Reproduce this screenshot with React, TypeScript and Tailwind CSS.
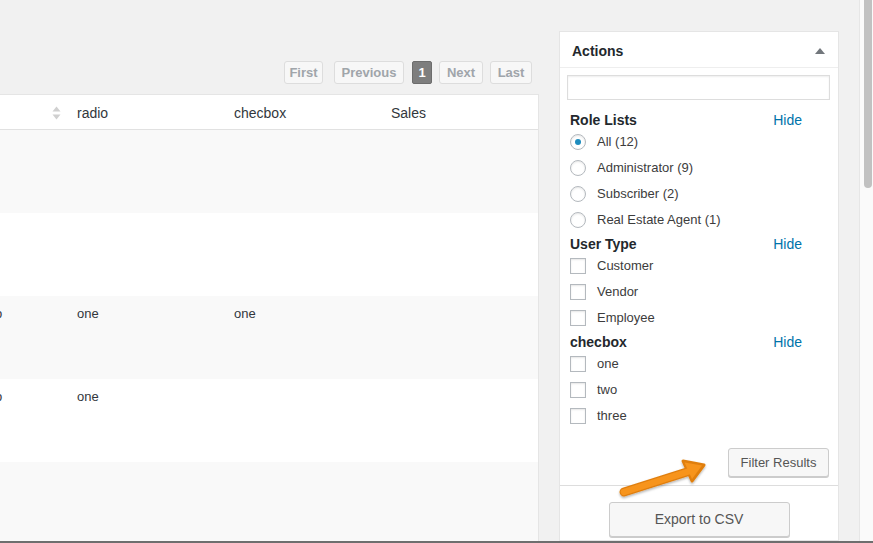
import React from "react";

const font = { fontFamily: '"Liberation Sans", Arial, sans-serif' };

function PageBtn({ label, w }: { label: string; w: string }) {
  return (
    <div
      className={`${w} h-[23px] flex items-center justify-center border border-[#dddddd] bg-[#f7f7f7] rounded-[3px] text-[13px] font-bold text-[#a0a5aa]`}
    >
      {label}
    </div>
  );
}

function SortArrows() {
  return (
    <svg width="9" height="14" viewBox="0 0 9 14">
      <path d="M4.5 0.5 L8.5 5.5 L0.5 5.5 Z" fill="#d0d0d0" />
      <path d="M4.5 13.5 L8.5 8.5 L0.5 8.5 Z" fill="#d0d0d0" />
    </svg>
  );
}

function Row({ bg, c0, c1, c2 }: { bg: string; c0?: string; c1?: string; c2?: string }) {
  return (
    <div className={`flex shrink-0 h-[83px] ${bg} text-[13px] text-[#32373c]`}>
      <div className="w-[67px] overflow-hidden pt-[9px]">
        {c0 && <span className="block ml-[-5px] leading-[18px]">{c0}</span>}
      </div>
      <div className="w-[157px] px-[10px] pt-[9px] leading-[18px]">{c1}</div>
      <div className="w-[157px] px-[10px] pt-[9px] leading-[18px]">{c2}</div>
      <div className="flex-1 px-[10px] pt-[9px] leading-[18px]"></div>
    </div>
  );
}

function Radio({ checked }: { checked?: boolean }) {
  return (
    <div className="w-[16px] h-[16px] rounded-full border border-[#b4b9be] bg-white shadow-[inset_0_1px_2px_rgba(0,0,0,0.1)] flex items-center justify-center">
      {checked && <div className="w-[6px] h-[6px] rounded-full bg-[#1e8cbe]" />}
    </div>
  );
}

function Check() {
  return (
    <div className="w-[16px] h-[16px] border border-[#b4b9be] bg-white shadow-[inset_0_1px_2px_rgba(0,0,0,0.1)]" />
  );
}

function Heading({ title }: { title: string }) {
  return (
    <div className="h-[20px] flex items-center justify-between pl-[3px] pr-[36px]">
      <span className="text-[14px] font-bold text-[#23282d]">{title}</span>
      <span className="text-[14px] text-[#0073aa]">Hide</span>
    </div>
  );
}

function Option({ label, radio, checked }: { label: string; radio?: boolean; checked?: boolean }) {
  return (
    <div className="h-[26px] flex items-center pl-[3px] pb-[2px] gap-[11px] text-[13px] text-[#3c3c3c]">
      {radio ? <Radio checked={checked} /> : <Check />}
      <span>{label}</span>
    </div>
  );
}

function Arrow() {
  return (
    <svg
      width="100"
      height="50"
      viewBox="0 0 100 50"
      className="absolute left-[610px] top-[453px] pointer-events-none"
    >
      <defs>
        <filter id="sh" x="-20%" y="-20%" width="140%" height="160%">
          <feDropShadow dx="0" dy="1.5" stdDeviation="1.2" floodColor="#000" floodOpacity="0.3" />
        </filter>
      </defs>
      <g filter="url(#sh)">
        <line x1="14" y1="39" x2="80" y2="18" stroke="#e07f10" strokeWidth="9" strokeLinecap="round" />
        <path d="M73 8 L94 12 L82 28 Z" fill="#e07f10" stroke="#e07f10" strokeWidth="3" strokeLinejoin="round" />
        <line x1="14" y1="39" x2="80" y2="18" stroke="#f7941d" strokeWidth="6.5" strokeLinecap="round" />
        <path d="M74.5 9.5 L92 12.5 L82 26 Z" fill="#f7941d" />
      </g>
    </svg>
  );
}

export default function App() {
  return (
    <div className="w-[873px] h-[543px] overflow-hidden bg-[#f1f1f1] relative" style={font}>
      <div className="flex h-[541px]">
        {/* main */}
        <div className="w-[539px] shrink-0 flex flex-col">
          <div className="h-[61px] shrink-0" />
          <div className="flex shrink-0 justify-end items-center pr-[7px] h-[23px]">
            <PageBtn label="First" w="w-[39px]" />
            <div className="w-[11px]" />
            <PageBtn label="Previous" w="w-[70px]" />
            <div className="w-[8px]" />
            <div className="w-[20px] h-[23px] flex items-center justify-center bg-[#7e7e7e] border border-[#6d6d6d] rounded-[2px] text-white text-[13px] font-bold">
              1
            </div>
            <div className="w-[7px]" />
            <PageBtn label="Next" w="w-[44px]" />
            <div className="w-[7px]" />
            <PageBtn label="Last" w="w-[42px]" />
          </div>
          <div className="h-[10px] shrink-0" />
          <div className="flex-1 min-h-0 border-t border-r border-[#e5e5e5] bg-white flex flex-col overflow-hidden">
            <div className="h-[35px] shrink-0 flex items-center pt-[2px] border-b border-[#e1e1e1] text-[14px] text-[#32373c] bg-white">
              <div className="w-[67px] flex justify-end pr-[6px]">
                <SortArrows />
              </div>
              <div className="w-[157px] px-[10px]">radio</div>
              <div className="w-[157px] px-[10px]">checbox</div>
              <div className="flex-1 px-[10px]">Sales</div>
            </div>
            <Row bg="bg-[#f9f9f9]" />
            <Row bg="bg-white" />
            <Row bg="bg-[#f9f9f9]" c0="o" c1="one" c2="one" />
            <Row bg="bg-white" c0="o" c1="one" />
            <Row bg="bg-[#f9f9f9]" />
          </div>
        </div>

        <div className="w-[20px] shrink-0" />

        {/* panel */}
        <div className="w-[280px] shrink-0 mt-[31px] border border-[#e5e5e5] bg-white flex flex-col">
          <div className="h-[36px] flex items-center justify-between pl-[12px] pr-[13px] pt-[3px] border-b border-[#eeeeee]">
            <span className="text-[14px] font-bold text-[#23282d]">Actions</span>
            <svg width="10" height="6" viewBox="0 0 10 6">
              <path d="M5 0 L10 6 L0 6 Z" fill="#72777c" />
            </svg>
          </div>
          <div className="pl-[7px] pr-[8px] pt-[7px]">
            <div className="h-[25px] border border-[#dddddd] shadow-[inset_0_1px_2px_rgba(0,0,0,0.07)] bg-white" />
          </div>
          <div className="pl-[7px] pt-[10px]">
            <Heading title="Role Lists" />
            <Option radio checked label="All (12)" />
            <Option radio label="Administrator (9)" />
            <Option radio label="Subscriber (2)" />
            <Option radio label="Real Estate Agent (1)" />
            <Heading title="User Type" />
            <Option label="Customer" />
            <Option label="Vendor" />
            <Option label="Employee" />
            <Heading title="checbox" />
            <Option label="one" />
            <Option label="two" />
            <Option label="three" />
          </div>
          <div className="flex justify-end pr-[9px] pt-[18px] pb-[8px] border-b border-[#dddddd]">
            <div className="w-[101px] h-[29px] flex items-center justify-center bg-[#f7f7f7] border border-[#cccccc] rounded-[3px] shadow-[0_1px_0_#cccccc] text-[13px] text-[#555555]">
              Filter Results
            </div>
          </div>
          <div className="flex justify-center pt-[16px]">
            <div className="w-[181px] h-[35px] flex items-center justify-center bg-[#f7f7f7] border border-[#cccccc] rounded-[3px] shadow-[0_1px_0_#cccccc] text-[14px] text-[#555555]">
              Export to CSV
            </div>
          </div>
        </div>

        <div className="flex-1" />

        {/* scrollbar */}
        <div className="w-[14px] shrink-0 border-l border-[#e6e6e6] bg-[#fafafa] flex justify-center">
          <div className="w-[8px] h-[188px] bg-[#c1c1c1] rounded-b-[4px] ml-[2px]" />
        </div>
      </div>
      <div className="h-[2px] bg-[#6e6e6e]" />
      <Arrow />
    </div>
  );
}
